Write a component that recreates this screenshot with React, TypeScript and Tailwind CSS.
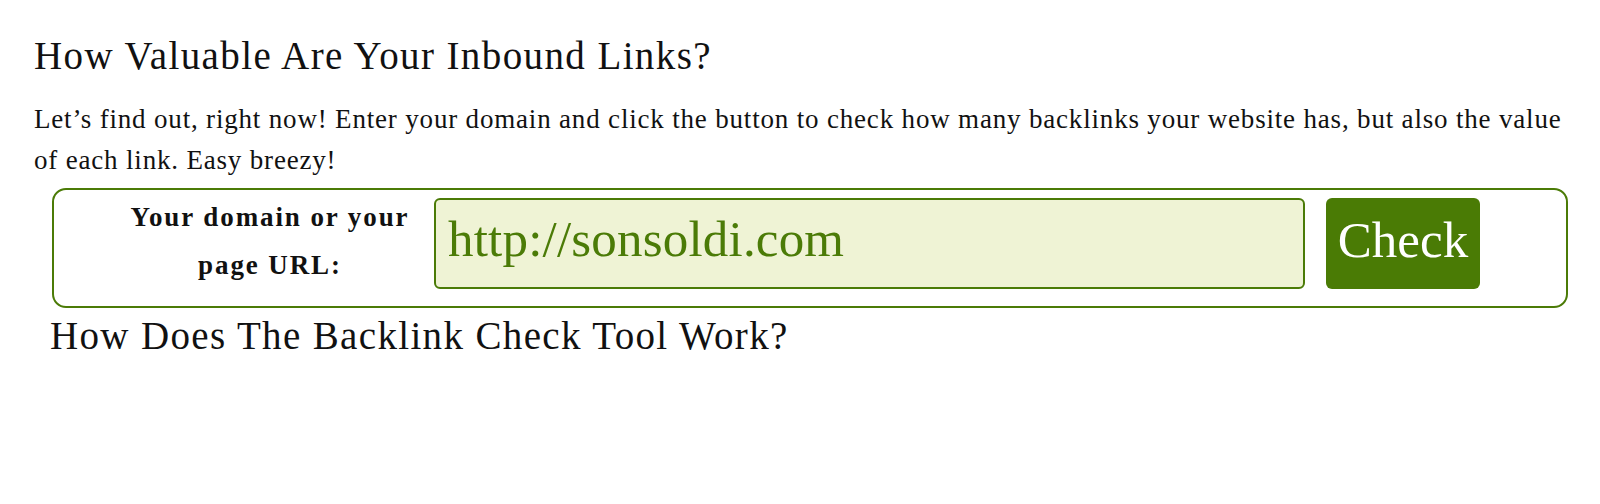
import React from "react";

export default function App() {
  return (
    <div
      className="w-[1600px] h-[504px] bg-white text-[#111111] overflow-hidden"
      style={{ fontFamily: '"Liberation Serif", "Times New Roman", serif' }}
    >
      <div className="pl-[34px]">
        <h1 className="pt-[34px] text-[39px] leading-[44px] tracking-[1.4px] font-normal">
          How Valuable Are Your Inbound Links?
        </h1>
        <p className="mt-[21px] text-[27px] leading-[41px] tracking-[0.82px]">
          Let’s find out, right now! Enter your domain and click the button to check how many backlinks your website has, but also the value
          <br />
          of each link. Easy breezy!
        </p>
        <div className="ml-[18px] mt-[7px] w-[1516px] h-[120px] border-2 border-[#4b7b07] rounded-[14px] flex items-start">
          <label className="w-[380px] pl-[52px] text-center font-bold text-[27px] leading-[48px] tracking-[1.9px] mt-[3px]">
            Your domain or your
            <br />
            page URL:
          </label>
          <div className="mt-[8px] w-[871px] h-[91px] border-2 border-[#4b7b07] rounded-[6px] bg-[#eff3d5] flex items-center pl-[12px]">
            <span className="text-[51px] leading-none text-[#4b7b07] -mt-[8px] tracking-[0.2px]">http://sonsoldi.com</span>
          </div>
          <button className="mt-[8px] ml-[21px] w-[154px] h-[91px] rounded-[6px] bg-[#4a7b05] text-white text-[51px] leading-none flex items-center justify-center">
            <span className="-mt-[6px]">Check</span>
          </button>
        </div>
        <h2 className="ml-[16px] mt-[6px] text-[39px] leading-[44px] tracking-[1.35px] font-normal">
          How Does The Backlink Check Tool Work?
        </h2>
      </div>
    </div>
  );
}
